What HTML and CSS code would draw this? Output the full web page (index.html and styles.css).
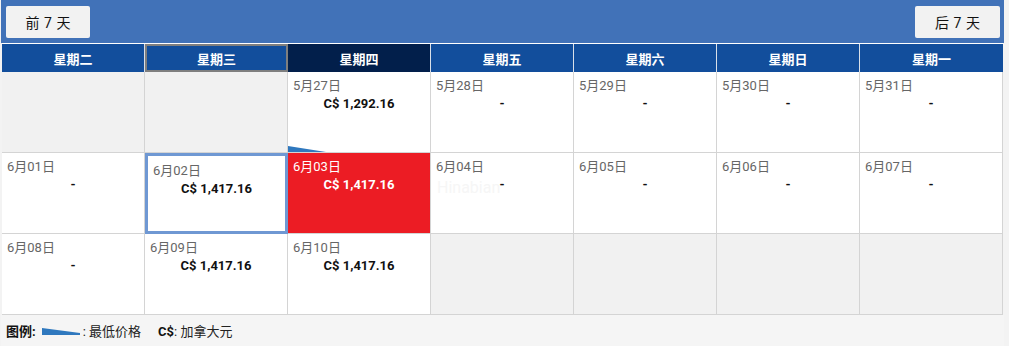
FILE: index.html
```html
<!DOCTYPE html>
<html lang="zh">
<head>
<meta charset="utf-8">
<link rel="stylesheet" href="styles.css">
</head>
<body>
<div class="wrap">
  <div class="topbar">
    <button class="nav-btn">前 7 天</button>
    <button class="nav-btn">后 7 天</button>
  </div>
  <div class="cal">
    <div class="head">
      <div class="hcell">星期二</div>
      <div class="hcell today-col">星期三</div>
      <div class="hcell sel-col">星期四</div>
      <div class="hcell">星期五</div>
      <div class="hcell">星期六</div>
      <div class="hcell">星期日</div>
      <div class="hcell">星期一</div>
    </div>
    <div class="grid">
      <div class="cell empty"></div>
      <div class="cell empty"></div>
      <div class="cell"><div class="date">5月27日</div><div class="price">C$ 1,292.16</div>
        <svg class="lowmark" width="38" height="6" viewBox="0 0 38 6"><polygon points="0,0 38,6 0,6" fill="#2f78be"/></svg></div>
      <div class="cell"><div class="date">5月28日</div><div class="price">-</div></div>
      <div class="cell"><div class="date">5月29日</div><div class="price">-</div></div>
      <div class="cell"><div class="date">5月30日</div><div class="price">-</div></div>
      <div class="cell"><div class="date">5月31日</div><div class="price">-</div></div>

      <div class="cell"><div class="date">6月01日</div><div class="price">-</div></div>
      <div class="cell today"><div class="date">6月02日</div><div class="price">C$ 1,417.16</div></div>
      <div class="cell selected"><div class="date">6月03日</div><div class="price">C$ 1,417.16</div></div>
      <div class="cell"><div class="date">6月04日</div><div class="price">-</div><div class="wm">Hinabian</div></div>
      <div class="cell"><div class="date">6月05日</div><div class="price">-</div></div>
      <div class="cell"><div class="date">6月06日</div><div class="price">-</div></div>
      <div class="cell"><div class="date">6月07日</div><div class="price">-</div></div>

      <div class="cell"><div class="date">6月08日</div><div class="price">-</div></div>
      <div class="cell"><div class="date">6月09日</div><div class="price">C$ 1,417.16</div></div>
      <div class="cell"><div class="date">6月10日</div><div class="price">C$ 1,417.16</div></div>
      <div class="cell empty"></div>
      <div class="cell empty"></div>
      <div class="cell empty"></div>
      <div class="cell empty"></div>
    </div>
  </div>
  <div class="legend">
    <b>图例:</b>
    <svg class="legmark" width="38" height="7" viewBox="0 0 38 7"><polygon points="0,0 38,5 38,7 0,7" fill="#2f78be"/></svg>
    <span>: 最低价格</span>
    <span class="cur"><b>C$</b>: 加拿大元</span>
  </div>
</div>
</body>
</html>
```

FILE: styles.css
```css
* { box-sizing: border-box; }
html, body { margin: 0; padding: 0; }
body {
  background: #f3f3f3;
  font-family: Roboto, "Noto Sans CJK SC", sans-serif;
  color: #222;
}
.wrap {
  margin-left: 1px;
  width: 1003px;
}
.topbar {
  background: #4172b8;
  height: 43px;
  display: flex;
  justify-content: space-between;
  align-items: flex-start;
  padding: 6px 4px 0 5px;
}
.nav-btn {
  width: 84px;
  height: 32px;
  border: none;
  border-radius: 2px;
  background: #f2f2f2;
  font-family: Roboto, "Noto Sans CJK SC", sans-serif;
  font-size: 14px;
  word-spacing: 1px;
  color: #111;
  padding: 0;
  cursor: pointer;
}
.nav-btn:last-child { width: 85px; }
.cal {
  margin-left: 1px;
  width: 1001px;
  border-top: 1px solid #fff;
  background: #fff;
}
.head {
  display: grid;
  grid-template-columns: repeat(7, 143px);
  height: 28px;
}
.hcell {
  background: #124e9c;
  color: #fff;
  font-weight: bold;
  font-size: 13px;
  display: flex;
  align-items: center;
  justify-content: center;
  border-right: 1px solid #d9dfe8;
}
.hcell:last-child { border-right: none; }
.hcell.today-col {
  border: 2px solid #7f7f7f;
}
.hcell.sel-col { background: #021f4b; }
.grid {
  display: grid;
  grid-template-columns: repeat(7, 143px);
  grid-auto-rows: 81px;
}
.cell {
  position: relative;
  background: #fff;
  border-right: 1px solid #d4d4d4;
  border-bottom: 1px solid #d4d4d4;
  padding: 6px 5px 0 5px;
}
.cell.empty { background: #f1f1f1; }
.date {
  font-size: 13px;
  line-height: 16px;
  color: #666;
}
.price {
  font-size: 13px;
  font-weight: bold;
  line-height: 20px;
  text-align: center;
  color: #111;
}
.cell.today {
  border: 3px solid #6f98d3;
  padding: 6px 5px 0 5px;
}
.cell.today .date { margin-top: 1px; }
.cell.selected { background: #ec1c24; }
.cell.selected .date,
.cell.selected .price { color: #fff; }
.lowmark {
  position: absolute;
  left: 0;
  bottom: 0;
  display: block;
}
.wm {
  position: absolute;
  left: 6px;
  top: 25px;
  font-size: 16px;
  color: #f6f6f6;
  pointer-events: none;
}
.legend {
  height: 32px;
  background: #f5f5f5;
  display: flex;
  align-items: center;
  padding-left: 5px;
  padding-bottom: 2px;
  font-size: 13px;
  color: #222;
}
.legend b { font-weight: bold; color: #111; }
.legmark { margin: 2px 3px 0 6px; display: block; }
.cur { margin-left: 17px; }
```
